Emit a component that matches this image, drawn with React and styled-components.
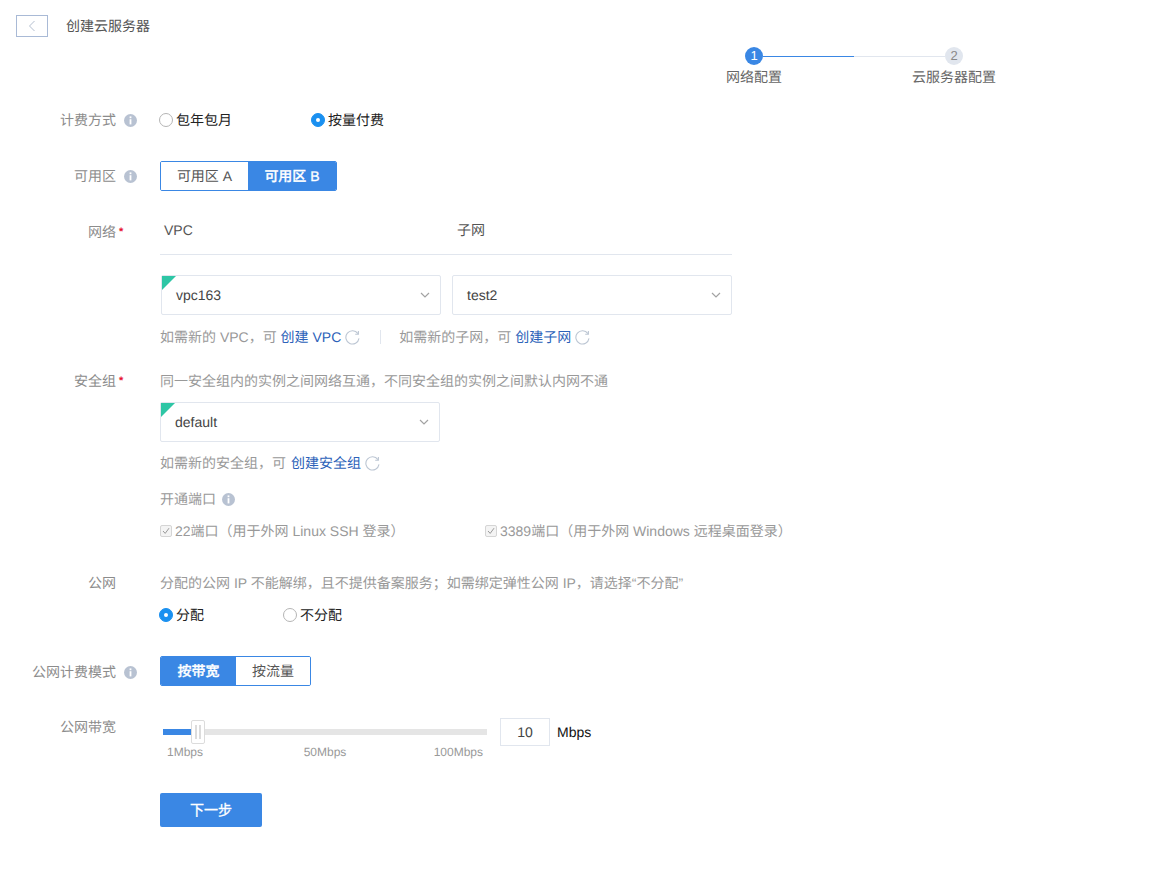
import React from "react";
import styled, { createGlobalStyle } from "styled-components";

const blue = "#3a87e4";
const line = "#e1e6ee";

const GlobalStyle = createGlobalStyle`
  html, body {
    margin: 0;
    background: #fff;
  }
  body {
    font-family: "Liberation Sans", "Noto Sans CJK SC", sans-serif;
    font-size: 14px;
    line-height: 20px;
    color: #444;
    text-rendering: geometricPrecision;
  }
`;

const Page = styled.div`
  width: 1167px;
  height: 874px;
  overflow: hidden;
`;

const Header = styled.div`
  display: flex;
  align-items: center;
  padding: 15px 0 0 16px;
`;

const BackButton = styled.button`
  display: flex;
  align-items: center;
  justify-content: center;
  width: 32px;
  height: 22px;
  padding: 0;
  background: #fff;
  border: 1px solid #a9bad6;
  color: #b4bfd0;
`;

const Title = styled.span`
  margin-left: 18px;
  color: #555;
`;

const Steps = styled.div`
  width: 284px;
  margin: 10px 0 0 712px;
`;

const StepTrack = styled.div`
  display: flex;
  align-items: center;
  margin-left: 33px;
`;

const StepDot = styled.div`
  display: flex;
  align-items: center;
  justify-content: center;
  width: 18px;
  height: 18px;
  border-radius: 50%;
  font-size: 13px;
  background: ${(props) => (props.active ? blue : "#e1e6ee")};
  color: ${(props) => (props.active ? "#fff" : "#888")};
`;

const StepLine = styled.div`
  width: 91px;
  height: 1px;
  background: ${(props) => (props.active ? blue : "#e1e6ee")};
`;

const StepLabels = styled.div`
  display: flex;
  justify-content: space-between;
  margin-top: 2px;
`;

const StepLabel = styled.div`
  width: 84px;
  text-align: center;
  color: #666;
`;

const Form = styled.div`
  margin-top: 23px;
`;

const Row = styled.div`
  display: grid;
  grid-template-columns: 116px 44px 1fr;
  margin-top: ${(props) => props.top || 0}px;
`;

const Label = styled.div`
  text-align: right;
  color: #8c8c8c;
  white-space: nowrap;
  padding-top: ${(props) => props.offset || 0}px;
`;

const Mark = styled.div`
  display: flex;
  align-items: center;
  height: 20px;
  padding-left: ${(props) => (props.required ? 3 : 8)}px;
  margin-top: ${(props) => props.offset || 0}px;
`;

const Star = styled.span`
  color: #e60f2d;
  font-size: 11px;
  font-weight: 700;
  line-height: 14px;
`;

const InfoIcon = styled.svg`
  display: block;
  width: 13px;
  height: 13px;
  flex: none;
`;

const RadioGroup = styled.div`
  display: flex;
  gap: 79px;
  margin-left: -1px;
  margin-top: ${(props) => props.top || 0}px;
`;

const RadioItem = styled.label`
  display: flex;
  align-items: center;
  gap: 3px;
  color: #222;
`;

const RadioDot = styled.span`
  box-sizing: border-box;
  display: flex;
  align-items: center;
  justify-content: center;
  width: 14px;
  height: 14px;
  border-radius: 50%;
  background: ${(props) => (props.checked ? "#1a90f0" : "#fff")};
  border: 1px solid ${(props) => (props.checked ? "#1a90f0" : "#b5b5b5")};

  &::after {
    content: "";
    display: ${(props) => (props.checked ? "block" : "none")};
    width: 4px;
    height: 4px;
    border-radius: 50%;
    background: #fff;
  }
`;

const Segments = styled.div`
  display: inline-flex;
  height: 30px;
  box-sizing: border-box;
  border: 1px solid ${blue};
  border-radius: 2px;
  overflow: hidden;
`;

const Segment = styled.div`
  display: flex;
  align-items: center;
  justify-content: center;
  width: ${(props) => props.size}px;
  background: ${(props) => (props.active ? blue : "#fff")};
  color: ${(props) => (props.active ? "#fff" : "#555")};
  font-weight: ${(props) => (props.active ? 500 : 400)};
  -webkit-text-stroke: ${(props) => (props.active ? "0.3px #fff" : "0")};
`;

const ColumnHead = styled.div`
  box-sizing: border-box;
  display: flex;
  width: 572px;
  padding: 0 0 14px 4px;
  border-bottom: 1px solid ${line};
  color: #555;
`;

const ColumnTitle = styled.div`
  flex: none;
  width: 293px;
`;

const SelectRow = styled.div`
  display: flex;
  gap: 11px;
  margin: 20px 0 0 1px;
`;

const Select = styled.div`
  position: relative;
  box-sizing: border-box;
  display: flex;
  align-items: center;
  justify-content: space-between;
  width: 280px;
  height: 40px;
  padding: 0 10px 0 14px;
  margin-top: ${(props) => props.top || 0}px;
  background: #fff;
  border: 1px solid ${line};
  border-radius: 2px;
  color: #444;

  ${(props) =>
    props.flag &&
    `&::before {
      content: "";
      position: absolute;
      top: 0;
      left: 0;
      border-style: solid;
      border-width: 14px 14px 0 0;
      border-color: #2ec6a5 transparent transparent transparent;
    }`}
`;

const Help = styled.div`
  display: flex;
  align-items: center;
  color: #999;
  white-space: pre;
  margin-top: ${(props) => props.top || 0}px;
`;

const Link = styled.a`
  color: #2c62b9;
  text-decoration: none;
  margin-left: ${(props) => props.shift || 0}px;
`;

const Refresh = styled.svg`
  display: block;
  width: 15px;
  height: 15px;
  margin-left: 4px;
  color: #bcc6d3;
`;

const HelpDivider = styled.span`
  width: 1px;
  height: 14px;
  margin: 0 18px 0 20px;
  background: #e1e6ee;
`;

const SubTitle = styled.div`
  display: flex;
  align-items: center;
  gap: 6px;
  margin-top: 16px;
  color: #999;
`;

const Checks = styled.div`
  display: flex;
  margin-top: 12px;
`;

const CheckItem = styled.div`
  display: flex;
  align-items: center;
  gap: 3px;
  width: 325px;
  color: #999;
  white-space: nowrap;
`;

const CheckBox = styled.span`
  box-sizing: border-box;
  display: flex;
  align-items: center;
  justify-content: center;
  width: 12px;
  height: 12px;
  border: 1px solid #d5d5d5;
  border-radius: 2px;
  background: #f4f4f4;
  color: #999;
`;

const SliderRow = styled.div`
  display: flex;
  align-items: flex-start;
`;

const Slider = styled.div`
  width: 324px;
  margin-left: 3px;
  padding-top: 12px;
`;

const Track = styled.div`
  position: relative;
  height: 6px;
  background: #e5e5e5;
`;

const TrackFill = styled.div`
  height: 100%;
  background: ${blue};
`;

const Handle = styled.div`
  position: absolute;
  top: -9px;
  box-sizing: border-box;
  display: flex;
  align-items: center;
  justify-content: center;
  gap: 2px;
  width: 14px;
  height: 24px;
  background: #fff;
  border: 1px solid #dcdcdc;
  border-radius: 2px;

  &::before,
  &::after {
    content: "";
    width: 2px;
    height: 14px;
    background: #dcdcdc;
  }
`;

const Scale = styled.div`
  display: grid;
  grid-template-columns: 1fr auto 1fr;
  padding: 0 4px;
  margin-top: 7px;
  font-size: 12px;
  color: #999;
`;

const ScaleEnd = styled.span`
  text-align: right;
`;

const ValueInput = styled.div`
  box-sizing: border-box;
  display: flex;
  align-items: center;
  justify-content: center;
  width: 50px;
  height: 28px;
  margin: 1px 0 0 13px;
  border: 1px solid ${line};
  color: #444;
`;

const Unit = styled.span`
  margin: 5px 0 0 7px;
  color: #111;
`;

const NextButton = styled.button`
  display: block;
  width: 102px;
  height: 34px;
  padding: 0;
  background: ${blue};
  border: 0;
  border-radius: 2px;
  color: #fff;
  font: inherit;
  -webkit-text-stroke: 0.3px #fff;
`;

const Info = () => (
  <InfoIcon viewBox="0 0 13 13">
    <circle cx="6.5" cy="6.5" r="6.5" fill="#b8c2d2" />
    <rect x="5.6" y="2.4" width="1.8" height="1.8" fill="#fff" />
    <rect x="5.6" y="5.2" width="1.8" height="5.2" fill="#fff" />
  </InfoIcon>
);

const RefreshIcon = () => (
  <Refresh viewBox="0 0 15 15" fill="none" stroke="currentColor" strokeWidth="1.1">
    <path d="M12.9 3.6A6.6 6.6 0 1 0 14 8.4" />
    <path d="M13.4 1v3.2h-3.2" />
  </Refresh>
);

const Chevron = () => (
  <svg width="10" height="6" viewBox="0 0 10 6" fill="none" stroke="#a3a3a3" strokeWidth="1.2">
    <path d="M1 1l4 4 4-4" />
  </svg>
);

const Check = () => (
  <svg width="8" height="8" viewBox="0 0 8 8" fill="none" stroke="currentColor" strokeWidth="1">
    <path d="M1 4l2.2 2.4L7 1.2" />
  </svg>
);

const Radio = ({ checked, children }) => (
  <RadioItem>
    <RadioDot checked={checked} />
    {children}
  </RadioItem>
);

export default function App() {
  return (
    <Page>
      <GlobalStyle />
      <Header>
        <BackButton>
          <svg width="8" height="12" viewBox="0 0 8 12" fill="none" stroke="currentColor" strokeWidth="1">
            <path d="M6.5 1L1.5 6l5 5" />
          </svg>
        </BackButton>
        <Title>创建云服务器</Title>
      </Header>

      <Steps>
        <StepTrack>
          <StepDot active>1</StepDot>
          <StepLine active />
          <StepLine />
          <StepDot>2</StepDot>
        </StepTrack>
        <StepLabels>
          <StepLabel>网络配置</StepLabel>
          <StepLabel>云服务器配置</StepLabel>
        </StepLabels>
      </Steps>

      <Form>
        <Row>
          <Label>计费方式</Label>
          <Mark>
            <Info />
          </Mark>
          <RadioGroup>
            <Radio>包年包月</Radio>
            <Radio checked>按量付费</Radio>
          </RadioGroup>
        </Row>

        <Row top={31}>
          <Label offset={5}>可用区</Label>
          <Mark offset={5}>
            <Info />
          </Mark>
          <div>
            <Segments>
              <Segment size={87}>可用区 A</Segment>
              <Segment size={88} active>
                可用区 B
              </Segment>
            </Segments>
          </div>
        </Row>

        <Row top={29}>
          <Label offset={2}>网络</Label>
          <Mark required offset={2}>
            <Star>*</Star>
          </Mark>
          <div>
            <ColumnHead>
              <ColumnTitle>VPC</ColumnTitle>
              <ColumnTitle>子网</ColumnTitle>
            </ColumnHead>
            <SelectRow>
              <Select flag>
                vpc163
                <Chevron />
              </Select>
              <Select>
                test2
                <Chevron />
              </Select>
            </SelectRow>
            <Help top={12}>
              如需新的 VPC，可 <Link>创建 VPC</Link>
              <RefreshIcon />
              <HelpDivider />
              如需新的子网，可 <Link>创建子网</Link>
              <RefreshIcon />
            </Help>
          </div>
        </Row>

        <Row top={24}>
          <Label>安全组</Label>
          <Mark required>
            <Star>*</Star>
          </Mark>
          <div>
            <Help>同一安全组内的实例之间网络互通，不同安全组的实例之间默认内网不通</Help>
            <Select flag top={11}>
              default
              <Chevron />
            </Select>
            <Help top={11}>
              如需新的安全组，可 <Link shift={1}>创建安全组</Link>
              <RefreshIcon />
            </Help>
            <SubTitle>
              开通端口
              <Info />
            </SubTitle>
            <Checks>
              <CheckItem>
                <CheckBox>
                  <Check />
                </CheckBox>
                22端口（用于外网 Linux SSH 登录）
              </CheckItem>
              <CheckItem>
                <CheckBox>
                  <Check />
                </CheckBox>
                3389端口（用于外网 Windows 远程桌面登录）
              </CheckItem>
            </Checks>
          </div>
        </Row>

        <Row top={32}>
          <Label>公网</Label>
          <Mark />
          <div>
            <Help>分配的公网 IP 不能解绑，且不提供备案服务；如需绑定弹性公网 IP，请选择“不分配”</Help>
            <RadioGroup top={12}>
              <Radio checked>分配</Radio>
              <Radio>不分配</Radio>
            </RadioGroup>
          </div>
        </Row>

        <Row top={31}>
          <Label offset={6}>公网计费模式</Label>
          <Mark offset={6}>
            <Info />
          </Mark>
          <div>
            <Segments>
              <Segment size={75} active>
                按带宽
              </Segment>
              <Segment size={74}>按流量</Segment>
            </Segments>
          </div>
        </Row>

        <Row top={31}>
          <Label>公网带宽</Label>
          <Mark />
          <SliderRow>
            <Slider>
              <Track>
                <TrackFill style={{ width: 28 }} />
                <Handle style={{ left: 28 }} />
              </Track>
              <Scale>
                <span>1Mbps</span>
                <span>50Mbps</span>
                <ScaleEnd>100Mbps</ScaleEnd>
              </Scale>
            </Slider>
            <ValueInput>10</ValueInput>
            <Unit>Mbps</Unit>
          </SliderRow>
        </Row>

        <Row top={31}>
          <div />
          <div />
          <NextButton>下一步</NextButton>
        </Row>
      </Form>
    </Page>
  );
}
